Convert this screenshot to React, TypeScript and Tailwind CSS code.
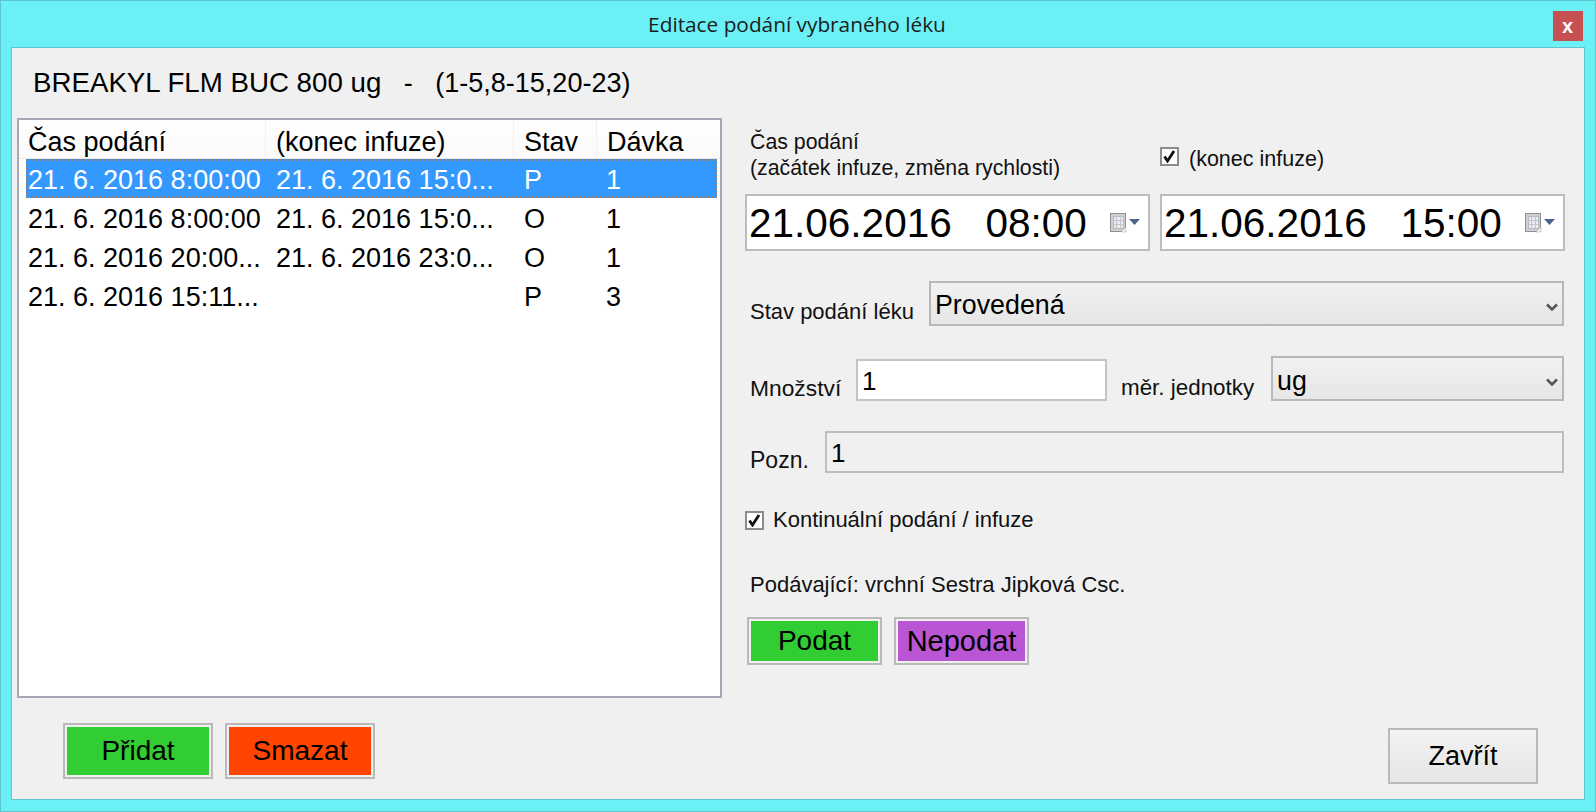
const rows = [
  { start: '21. 6. 2016 8:00:00', end: '21. 6. 2016 15:0...', state: 'P', dose: '1', selected: true },
  { start: '21. 6. 2016 8:00:00', end: '21. 6. 2016 15:0...', state: 'O', dose: '1' },
  { start: '21. 6. 2016 20:00...', end: '21. 6. 2016 23:0...', state: 'O', dose: '1' },
  { start: '21. 6. 2016 15:11...', end: '', state: 'P', dose: '3' },
];

function CalendarButton() {
  return (
    <svg width="30" height="20" viewBox="0 0 30 20" className="shrink-0">
      <rect x="0.5" y="0.5" width="15" height="18" fill="#cfcfcf" stroke="#8f8f8f" />
      <rect x="3.5" y="3.5" width="10" height="12" fill="#e9ecf2" stroke="#b8b8c0" />
      <path d="M3.5 7.5h10M3.5 11.5h10M6.5 3.5v12M10.5 3.5v12" stroke="#c4c4cc" strokeWidth="1" />
      <path d="M16 19h-5l5-5z" fill="#f4f4f4" stroke="#a0a0a0" strokeWidth="0.5" />
      <path d="M19 6h11l-5.5 6z" fill="#4c6489" />
    </svg>
  );
}

function Check() {
  return (
    <span className="flex h-[19px] w-[19px] shrink-0 items-center justify-center border-2 border-[#8c8c8c] bg-white">
      <svg width="13" height="13" viewBox="0 0 13 13">
        <path d="M1.5 6.5l3 4.5 6.5-10" fill="none" stroke="#111" strokeWidth="2.8" />
      </svg>
    </span>
  );
}

function DateField({ text }: { text: string }) {
  return (
    <div className="flex h-[57px] w-[405px] items-center justify-between border-2 border-[#bdbdbd] bg-white pr-[8px] pl-[2px]">
      <span className="pt-[2px] text-[40.5px] leading-none whitespace-pre text-black">{text}</span>
      <CalendarButton />
    </div>
  );
}

function Combo({ text, className }: { text: string; className: string }) {
  return (
    <div className={`flex items-start justify-between border-2 border-[#b8b8b8] bg-gradient-to-b from-[#f1f1f1] to-[#e6e6e6] pr-[4px] pl-[4px] ${className}`}>
      <span className="text-[26.8px] leading-[30px] text-black">{text}</span>
      <svg width="12" height="9" viewBox="0 0 12 9" className="self-center">
        <path d="M1 1.5l5 5 5-5" fill="none" stroke="#555" strokeWidth="2.6" />
      </svg>
    </div>
  );
}

function ColorButton({ label, className }: { label: string; className: string }) {
  return (
    <button className={`border-2 border-[#b9b9b9] p-[2px] leading-none text-black ${className}`}>
      <span className="flex h-full w-full items-center justify-center">{label}</span>
    </button>
  );
}

export default function App() {
  return (
    <div className="flex h-[812px] w-[1596px] flex-col overflow-hidden border border-[#5fc4cf] bg-[#6bf0f5] font-['Liberation_Sans',sans-serif]">
      <div className="flex h-[46px] shrink-0 items-start">
        <div className="flex-1 pt-[8px] pl-[40px] text-center font-['Open_Sans',sans-serif] text-[20.8px] leading-[31px] text-[#1c1c1c]">
          Editace podání vybraného léku
        </div>
        <button className="mt-[10px] mr-[12px] flex h-[30px] w-[30px] items-center justify-center bg-[#c75050] pr-[1px] pb-[1px] text-[20px] leading-none font-bold text-white">
          x
        </button>
      </div>

      <div className="mr-[10px] mb-[11px] ml-[10px] flex min-h-0 flex-1 border border-[#5fc4cf] bg-[#f0f0f0]">
        <div className="ml-[5px] flex w-[705px] shrink-0 flex-col">
          <div className="flex h-[70px] shrink-0 items-center pl-[16px] text-[27px] leading-none whitespace-pre text-black">
            <span className="text-[27.7px]">BREAKYL FLM BUC 800 ug</span>   -   (1-5,8-15,20-23)
          </div>

          <div className="h-[580px] shrink-0 border-2 border-[#a4a8b4] bg-white text-[27px] leading-none">
            <div className="flex h-[39px] border-b border-[#e4e9ef] bg-gradient-to-b from-white to-[#fafafa] text-black">
              <div className="w-[247px] border-r border-[#eef1f5] pl-[9px] leading-[44px]">Čas podání</div>
              <div className="w-[248px] border-r border-[#eef1f5] pl-[10px] leading-[44px]">(konec infuze)</div>
              <div className="w-[83px] border-r border-[#eef1f5] pl-[10px] leading-[44px]">Stav</div>
              <div className="w-[119px] pl-[10px] leading-[44px]">Dávka</div>
            </div>
            <div className="pl-[7px]">
              {rows.map((row) => (
                <div
                  key={row.start + row.state}
                  className={row.selected
                    ? 'flex h-[39px] w-[691px] items-center border-2 border-dotted border-[#9a7a62] bg-[#3399ff] pt-[4px] text-white'
                    : 'flex h-[39px] w-[691px] items-center border-2 border-transparent pt-[3px] text-black'}
                >
                  <div className="w-[238px] whitespace-pre">{row.start}</div>
                  <div className="w-[248px] pl-[10px] whitespace-pre">{row.end}</div>
                  <div className="w-[82px] pl-[10px]">{row.state}</div>
                  <div className="pl-[10px]">{row.dose}</div>
                </div>
              ))}
            </div>
          </div>

          <div className="mt-[25px] ml-[46px] flex gap-[12px] text-[28px]">
            <ColorButton label="Přidat" className="h-[56px] w-[150px] [&>span]:bg-[#32cd32]" />
            <ColorButton label="Smazat" className="h-[56px] w-[150px] [&>span]:bg-[#ff4500]" />
          </div>
        </div>

        <div className="ml-[23px] flex w-[820px] shrink-0 flex-col pt-[69px] text-[22px] text-[#111]">
          <div className="flex h-[77px] shrink-0 items-start pt-[6px]">
            <div className="w-[415px] pt-[6px] pl-[5px] text-[21.3px] leading-[26px]">
              Čas podání
              <br />
              (začátek infuze, změna rychlosti)
            </div>
            <label className="mt-[23px] flex items-start gap-[10px] text-[21.5px] leading-[26px]">
              <span className="pt-[1px]">
                <Check />
              </span>
              <span>(konec infuze)</span>
            </label>
          </div>

          <div className="flex gap-[10px]">
            <DateField text="21.06.2016   08:00" />
            <DateField text="21.06.2016   15:00" />
          </div>

          <div className="mt-[30px] flex items-end">
            <span className="mb-[1px] w-[184px] pl-[5px] leading-[26px]">Stav podání léku</span>
            <Combo text="Provedená" className="h-[45px] w-[635px] pt-[7px]" />
          </div>

          <div className="mt-[30px] flex items-end">
            <span className="w-[111px] pl-[5px] text-[22.8px] leading-[26px]">Množství</span>
            <div className="h-[42px] w-[251px] border-2 border-[#c4c4c4] bg-white pt-[5px] pl-[4px] text-[26px] leading-[30px] text-black">1</div>
            <span className="w-[164px] pl-[14px] text-[22.4px] leading-[26px]">měr. jednotky</span>
            <Combo text="ug" className="h-[45px] w-[293px] pt-[8px]" />
          </div>

          <div className="mt-[30px] flex items-end">
            <span className="w-[80px] pt-[1px] pl-[5px] text-[23px] leading-[26px]">Pozn.</span>
            <div className="h-[42px] w-[739px] border-2 border-[#bdbdbd] bg-[#f0f0f0] pt-[5px] pl-[4px] text-[26px] leading-[30px] text-black">1</div>
          </div>

          <label className="mt-[34px] flex items-center gap-[9px] leading-[26px]">
            <Check />
            Kontinuální podání / infuze
          </label>

          <div className="mt-[39px] pl-[5px] leading-[26px]">Podávající: vrchní Sestra Jipková Csc.</div>

          <div className="mt-[19px] flex gap-[12px] pl-[2px]">
            <ColorButton label="Podat" className="h-[48px] w-[135px] text-[28px] [&>span]:bg-[#32cd32]" />
            <ColorButton label="Nepodat" className="h-[48px] w-[135px] text-[29px] [&>span]:bg-[#ba55d3]" />
          </div>

          <button className="mt-[63px] mr-[27px] h-[56px] w-[150px] self-end border-2 border-[#b9b9b9] bg-gradient-to-b from-[#f2f2f2] to-[#e6e6e6] text-[27px] leading-none text-black">
            Zavřít
          </button>
        </div>
      </div>
    </div>
  );
}
